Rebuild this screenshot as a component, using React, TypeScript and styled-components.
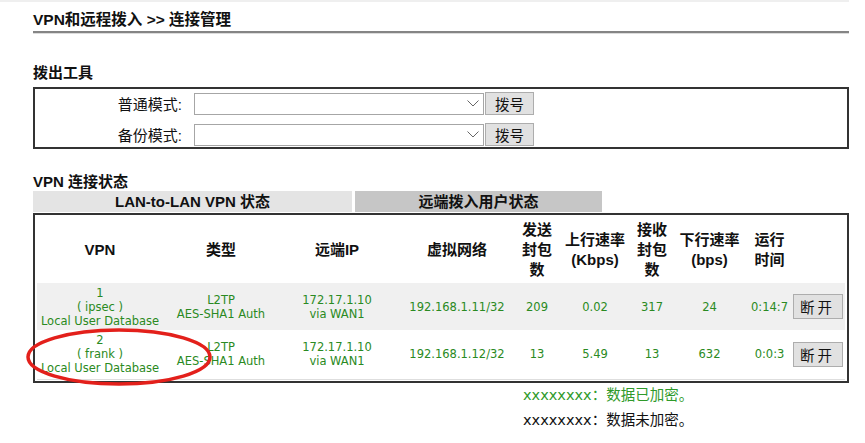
import React from 'react';
import styled, { createGlobalStyle } from 'styled-components';

const GlobalStyle = createGlobalStyle`
  body {
    margin: 0;
    background: #fff;
    font-family: "Liberation Sans", "Noto Sans CJK SC", sans-serif;
    color: #111;
  }
`;

const Page = styled.div`
  border-top: 2px solid #efefef;
  padding: 8px 0 0 33px;
  width: 816px;
`;

const Title = styled.div`
  font-size: 15.5px;
  font-weight: bold;
  line-height: 20px;
  padding-bottom: 1px;
  border-bottom: 2px solid #858585;
  box-shadow: 0 1px 0 #dcdcdc;
`;

const SectionHead = styled.div<{ $top: number }>`
  margin-top: ${({ $top }) => $top}px;
  font-size: 15px;
  font-weight: bold;
  line-height: 16px;
`;

const ToolBox = styled.div`
  margin-top: 6px;
  border: 2px solid #333;
  padding: 3px 0 1px;
  display: flex;
  flex-direction: column;
  gap: 8px;
`;

const ToolRow = styled.div`
  display: flex;
  align-items: center;
  height: 23px;
`;

const ToolLabel = styled.label`
  width: 147px;
  text-align: right;
  font-size: 15px;
  margin-right: 12px;
`;

const SelectBox = styled.div`
  width: 290px;
  height: 22px;
  box-sizing: border-box;
  border: 1px solid #a6a6a6;
  background: #fff;
  display: flex;
  justify-content: flex-end;
  align-items: center;
  padding-right: 4px;
`;

const GrayButton = styled.button<{ $w: number; $h: number; $gap: number }>`
  width: ${({ $w }) => $w}px;
  height: ${({ $h }) => $h}px;
  box-sizing: border-box;
  margin: 0 0 0 1px;
  padding: 0;
  background: #e1e1e1;
  border: 1px solid #adadad;
  font-family: "Noto Sans CJK SC", sans-serif;
  font-size: 14.5px;
  letter-spacing: ${({ $gap }) => $gap}px;
  color: #111;
`;

const Tabs = styled.div`
  margin-top: 1px;
  display: flex;
  gap: 3px;
  height: 21px;
`;

const Tab = styled.div<{ $active?: boolean; $w: number }>`
  width: ${({ $w }) => $w}px;
  background: ${({ $active }) => ($active ? '#c6c6c6' : '#e4e4e4')};
  font-size: 15px;
  font-weight: bold;
  line-height: 21px;
  text-align: center;
`;

const TableBox = styled.div`
  position: relative;
  margin-top: 1px;
  border: 2px solid #333;
  padding: 2px 2px 1px;
`;

const Table = styled.table`
  width: 808px;
  border-collapse: collapse;
  table-layout: fixed;
`;

const Th = styled.th`
  font-size: 15px;
  font-weight: bold;
  line-height: 20px;
  height: 66px;
  padding: 0;
  text-align: center;
  vertical-align: middle;
`;

const Tr = styled.tr<{ $shade?: boolean; $h: number }>`
  background: ${({ $shade }) => ($shade ? '#f0f0f0' : '#fff')};
  height: ${({ $h }) => $h}px;
  border-bottom: ${({ $shade }) => ($shade ? 'none' : '1px solid #dedede')};
`;

const Td = styled.td`
  font-family: "DejaVu Sans", "Noto Sans CJK SC", sans-serif;
  font-size: 11.5px;
  line-height: 14px;
  color: #2a8a22;
  text-align: center;
  vertical-align: middle;
  padding: 0;
  white-space: nowrap;
`;

const Legend = styled.div`
  margin-left: 490px;
  margin-top: 3px;
  display: flex;
  flex-direction: column;
  gap: 7px;
`;

const LegendLine = styled.div<{ $green?: boolean }>`
  font-family: "DejaVu Sans", "Noto Sans CJK SC", sans-serif;
  font-size: 14.5px;
  line-height: 18px;
  color: ${({ $green }) => ($green ? '#2f9a2a' : '#111')};
`;

const Annotation = styled.svg`
  position: absolute;
  left: -10px;
  top: 111px;
  overflow: visible;
  pointer-events: none;
`;

const Chevron = () => (
  <svg width="12" height="7" viewBox="0 0 12 7">
    <polyline points="0.5,0.5 6,6 11.5,0.5" fill="none" stroke="#666" strokeWidth="1" />
  </svg>
);

const cols = [126, 116, 116, 124, 36, 80, 34, 81, 39, 56];

const rows = [
  { id: '1', name: 'ipsec', vip: '192.168.1.11/32', tx: '209', up: '0.02', rx: '317', down: '24', time: '0:14:7' },
  { id: '2', name: 'frank', vip: '192.168.1.12/32', tx: '13', up: '5.49', rx: '13', down: '632', time: '0:0:3' },
];

export default function App() {
  return (
    <Page>
      <GlobalStyle />
      <Title>VPN和远程拨入 &gt;&gt; 连接管理</Title>

      <SectionHead $top={32}>拨出工具</SectionHead>
      <ToolBox>
        {['普通模式:', '备份模式:'].map((label) => (
          <ToolRow key={label}>
            <ToolLabel>{label}</ToolLabel>
            <SelectBox>
              <Chevron />
            </SelectBox>
            <GrayButton $w={49} $h={23} $gap={0}>拨号</GrayButton>
          </ToolRow>
        ))}
      </ToolBox>

      <SectionHead $top={25}>VPN 连接状态</SectionHead>
      <Tabs>
        <Tab $w={319}>LAN-to-LAN VPN 状态</Tab>
        <Tab $w={247} $active>远端拨入用户状态</Tab>
      </Tabs>
      <TableBox>
        <Table>
          <colgroup>
            {cols.map((w, i) => (
              <col key={i} style={{ width: w }} />
            ))}
          </colgroup>
          <thead>
            <tr>
              <Th>VPN</Th>
              <Th>类型</Th>
              <Th>远端IP</Th>
              <Th>虚拟网络</Th>
              <Th>发送<br />封包<br />数</Th>
              <Th>上行速率<br />(Kbps)</Th>
              <Th>接收<br />封包<br />数</Th>
              <Th>下行速率<br />(bps)</Th>
              <Th>运行<br />时间</Th>
              <Th />
            </tr>
          </thead>
          <tbody>
            {rows.map((r, i) => (
              <Tr key={r.id} $shade={i === 0} $h={i === 0 ? 47 : 49}>
                <Td>{r.id}<br />( {r.name} )<br />Local User Database</Td>
                <Td>L2TP<br />AES-SHA1 Auth</Td>
                <Td>172.17.1.10<br />via WAN1</Td>
                <Td>{r.vip}</Td>
                <Td>{r.tx}</Td>
                <Td>{r.up}</Td>
                <Td>{r.rx}</Td>
                <Td>{r.down}</Td>
                <Td>{r.time}</Td>
                <Td>
                  <GrayButton $w={50} $h={25} $gap={3}>断开</GrayButton>
                </Td>
              </Tr>
            ))}
          </tbody>
        </Table>
        <Annotation width="190" height="60">
          <ellipse cx="94" cy="31" rx="91" ry="27" fill="none" stroke="#e3201b" strokeWidth="3.5" />
        </Annotation>
      </TableBox>
      <Legend>
        <LegendLine $green>xxxxxxxx：数据已加密。</LegendLine>
        <LegendLine>xxxxxxxx：数据未加密。</LegendLine>
      </Legend>
    </Page>
  );
}
